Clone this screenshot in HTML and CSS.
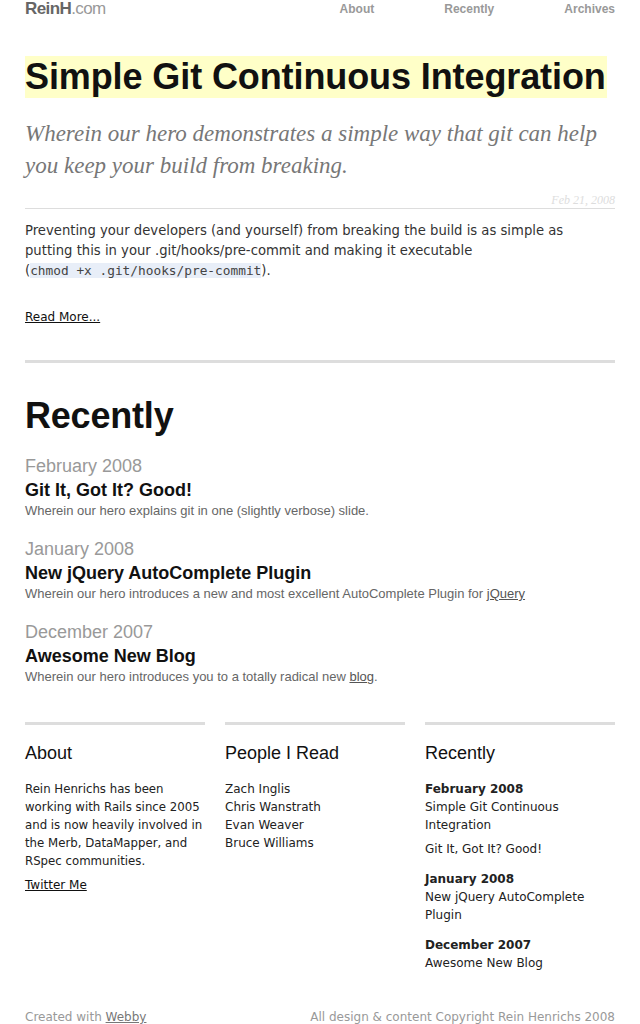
FILE: index.html
```html
<!DOCTYPE html>
<html>
<head>
<meta charset="utf-8">
<link rel="stylesheet" href="styles.css">
</head>
<body>
<div class="page">
  <header class="site-header">
    <a class="logo" href="#"><span class="logo-main">ReinH</span><span class="logo-tld">.com</span></a>
    <nav class="nav">
      <a href="#">About</a>
      <a href="#">Recently</a>
      <a href="#">Archives</a>
    </nav>
  </header>

  <article class="post">
    <h1 class="post-title"><span>Simple Git Continuous Integration</span></h1>
    <p class="post-lede">Wherein our hero demonstrates a simple way that git can help you keep your build from breaking.</p>
    <div class="post-date">Feb 21, 2008</div>
    <p class="post-body">Preventing your developers (and yourself) from breaking the build is as simple as putting this in your .git/hooks/pre-commit and making it executable <span class="cmd">(<code>chmod +x .git/hooks/pre-commit</code>).</span></p>
    <a class="read-more" href="#">Read More...</a>
  </article>

  <section class="recent">
    <h2 class="recent-title">Recently</h2>
    <div class="recent-group">
      <div class="recent-month">February 2008</div>
      <h3 class="recent-head">Git It, Got It? Good!</h3>
      <p class="recent-desc">Wherein our hero explains git in one (slightly verbose) slide.</p>
    </div>
    <div class="recent-group">
      <div class="recent-month">January 2008</div>
      <h3 class="recent-head">New jQuery AutoComplete Plugin</h3>
      <p class="recent-desc">Wherein our hero introduces a new and most excellent AutoComplete Plugin for <a href="#">jQuery</a></p>
    </div>
    <div class="recent-group">
      <div class="recent-month">December 2007</div>
      <h3 class="recent-head">Awesome New Blog</h3>
      <p class="recent-desc">Wherein our hero introduces you to a totally radical new <a href="#">blog</a>.</p>
    </div>
  </section>

  <section class="columns">
    <div class="col">
      <h4 class="col-title">About</h4>
      <p class="col-text">Rein Henrichs has been working with Rails since 2005 and is now heavily involved in the Merb, DataMapper, and RSpec communities.</p>
      <a class="col-link" href="#">Twitter Me</a>
    </div>
    <div class="col">
      <h4 class="col-title">People I Read</h4>
      <ul class="people">
        <li>Zach Inglis</li>
        <li>Chris Wanstrath</li>
        <li>Evan Weaver</li>
        <li>Bruce Williams</li>
      </ul>
    </div>
    <div class="col col-wide">
      <h4 class="col-title">Recently</h4>
      <div class="side-group">
        <div class="side-month">February 2008</div>
        <div class="side-item">Simple Git Continuous Integration</div>
        <div class="side-item">Git It, Got It? Good!</div>
      </div>
      <div class="side-group">
        <div class="side-month">January 2008</div>
        <div class="side-item">New jQuery AutoComplete Plugin</div>
      </div>
      <div class="side-group">
        <div class="side-month">December 2007</div>
        <div class="side-item">Awesome New Blog</div>
      </div>
    </div>
  </section>

  <footer class="site-footer">
    <span>Created with <a href="#">Webby</a></span>
    <span>All design &amp; content Copyright Rein Henrichs 2008</span>
  </footer>
</div>
</body>
</html>
```

FILE: styles.css
```css
* { box-sizing: border-box; }
html, body { margin: 0; padding: 0; background: #fff; }
body { font-family: "Liberation Sans", Arial, sans-serif; color: #111; }
a { color: inherit; }

.page { width: 590px; margin: 0 25px; }

.site-header {
  display: flex;
  justify-content: space-between;
  align-items: flex-start;
  height: 18px;
}
.logo {
  text-decoration: none;
  font-size: 17px;
  line-height: 18px;
  letter-spacing: -0.6px;
}
.logo-main { color: #666; font-weight: bold; }
.logo-tld { color: #999; }
.nav { display: flex; }
.nav a {
  text-decoration: none;
  color: #999;
  font-size: 12px;
  font-weight: bold;
  line-height: 18px;
  margin-left: 70px;
}
.nav a:first-child { margin-left: 0; }

.post { padding-top: 38px; }
.post-title {
  margin: 0;
  font-size: 36px;
  line-height: 42px;
  font-weight: bold;
  letter-spacing: -0.1px;
}
.post-title span { background: #ffffc8; display: inline-block; padding: 0 1px 0 0; }
.post-lede {
  margin: 20px 0 0;
  font-family: "Liberation Serif", "Times New Roman", serif;
  font-style: italic;
  font-size: 23px;
  line-height: 32px;
  color: #777;
}
.post-date {
  text-align: right;
  font-family: "Liberation Serif", "Times New Roman", serif;
  font-style: italic;
  font-size: 12px;
  color: #ddd;
  line-height: 14px;
  margin-top: 11px;
  padding-bottom: 1px;
  border-bottom: 1px solid #ddd;
}
.post-body {
  margin: 12px 0 0;
  max-width: 562px;
  font-family: "DejaVu Sans", Verdana, sans-serif;
  font-size: 13.2px;
  line-height: 20px;
  color: #333;
}
.cmd { display: inline-block; white-space: nowrap; }
.post-body code {
  font-family: "DejaVu Sans Mono", monospace;
  font-size: 12.8px;
  line-height: 1;
  background: #e8eef8;
  color: #444;
}
.read-more {
  display: inline-block;
  margin-top: 27px;
  font-family: "DejaVu Sans", Verdana, sans-serif;
  font-size: 12px;
  line-height: 18px;
  color: #111;
}

.recent {
  margin-top: 34px;
  border-top: 3px solid #ddd;
}
.recent-title {
  margin: 32px 0 0;
  font-size: 36px;
  line-height: 42px;
  font-weight: bold;
  letter-spacing: -0.2px;
}
.recent-group { margin-top: 18px; }
.recent-group + .recent-group { margin-top: 19px; }
.recent-month {
  font-size: 18px;
  line-height: 22px;
  color: #999;
}
.recent-head {
  margin: 2px 0 0;
  font-size: 18px;
  line-height: 23px;
  font-weight: bold;
}
.recent-desc {
  margin: 0;
  font-size: 13px;
  line-height: 17px;
  color: #666;
}
.recent-desc a { color: #555; }

.columns {
  display: grid;
  grid-template-columns: 180px 180px 190px;
  column-gap: 20px;
  margin-top: 37px;
}
.col { border-top: 3px solid #ddd; }
.col-title {
  margin: 16px 0 0;
  font-size: 18px;
  font-weight: normal;
  line-height: 24px;
  color: #111;
}
.col-text, .people, .side-group {
  font-family: "DejaVu Sans", Verdana, sans-serif;
  font-size: 12px;
  line-height: 18px;
  color: #222;
}
.col-text { margin: 15px 0 0; font-size: 11.75px; }
.col-link {
  display: inline-block;
  margin-top: 6px;
  font-family: "DejaVu Sans", Verdana, sans-serif;
  font-size: 12px;
  line-height: 18px;
  color: #111;
}
.people { list-style: none; margin: 15px 0 0; padding: 0; }
.side-group:first-of-type { margin-top: 15px; }
.side-group { margin-bottom: 12px; }
.side-month { font-weight: bold; }
.side-item { margin-bottom: 6px; }
.side-item:last-child { margin-bottom: 0; }

.site-footer {
  display: flex;
  justify-content: space-between;
  margin-top: 24px;
  font-family: "DejaVu Sans", Verdana, sans-serif;
  font-size: 12px;
  line-height: 18px;
  color: #999;
}
.site-footer a { color: #777; }
```
